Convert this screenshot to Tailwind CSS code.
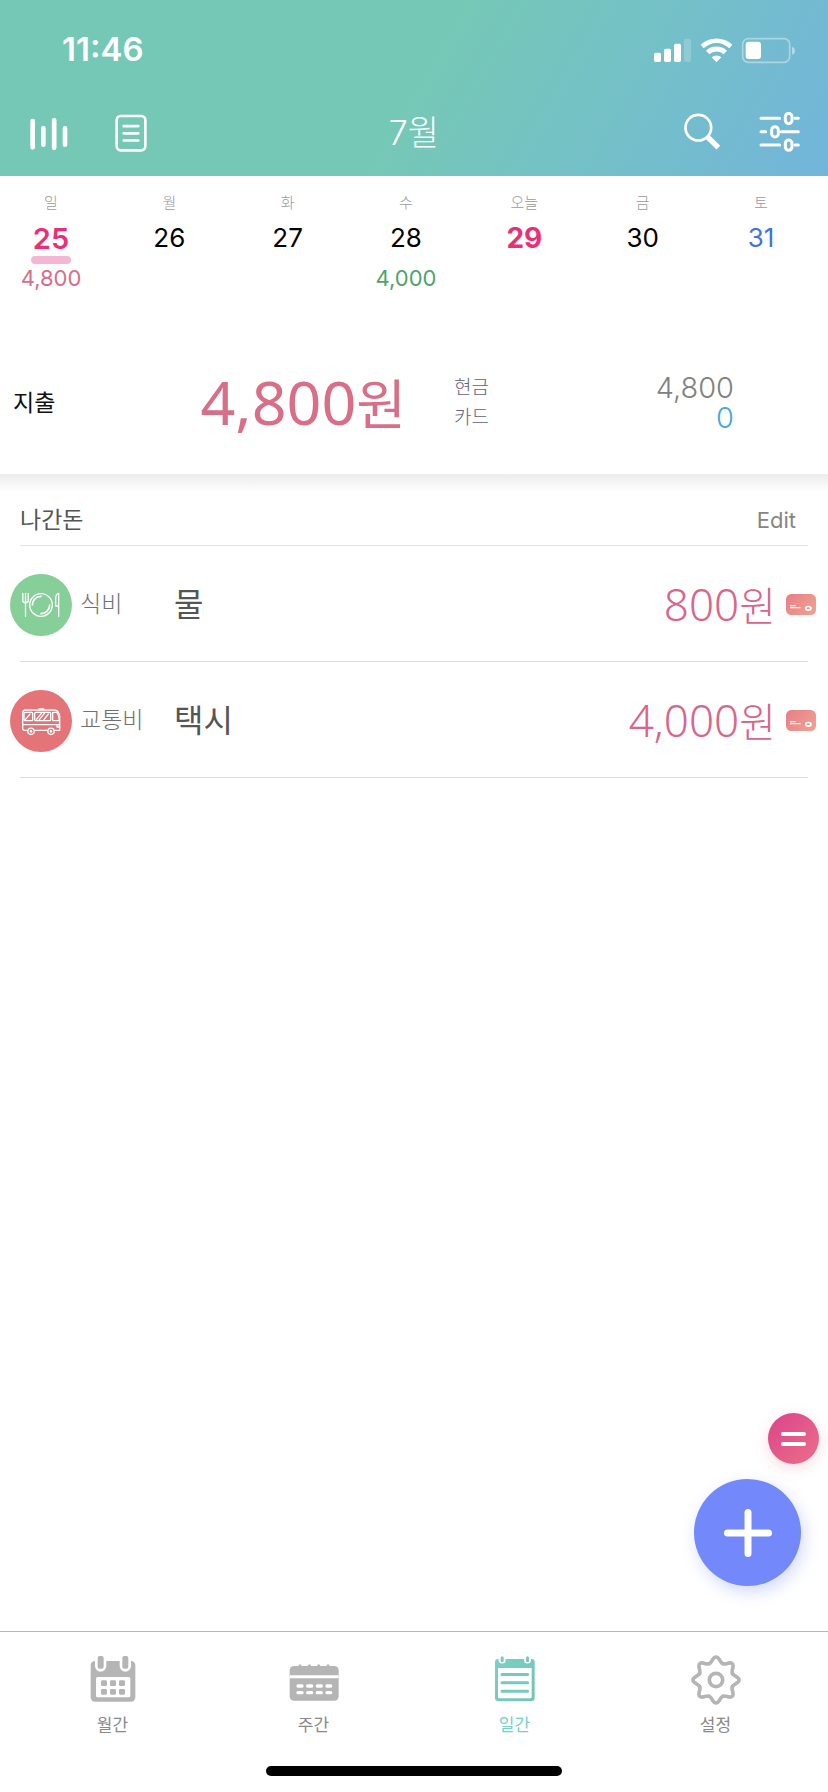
<!DOCTYPE html>
<html lang="ko">
<head>
<meta charset="utf-8">
<meta name="viewport" content="width=device-width, initial-scale=1">
<title>가계부</title>
<script src="https://cdn.jsdelivr.net/npm/@tailwindcss/browser@4"></script>
</head>
<body class="flex min-h-screen flex-col bg-white font-['Inter','Noto_Sans_CJK_KR',sans-serif]">

<header class="bg-linear-[120deg,#76c8b6_0%,#76c8b6_50%,#74c0c8_74%,#72b5da_100%] text-white">
  <div class="flex h-[98px] items-center justify-between pt-0.5 pr-8 pl-[62px]">
    <time class="text-[33px] font-semibold">11:46</time>
    <svg class="h-[30px] w-[142px]" viewBox="717 102 426 90" fill="#fff" aria-label="상태">
      <rect x="717" y="155" width="21" height="28" rx="5"/><rect x="747" y="143" width="21" height="40" rx="5"/><rect x="777" y="128" width="21" height="55" rx="5"/><rect x="807" y="113" width="21" height="70" rx="5" opacity=".2"/>
      <path d="M857 131a70 70 0 0 1 95 0l-9 11a55 55 0 0 0-77 0zM873 149a46 46 0 0 1 63 0l-10 11a31 31 0 0 0-43 0zM890 169a22 22 0 0 1 29 0l-15 15z"/>
      <rect x="983" y="113" width="141" height="71" rx="17" fill="none" stroke="#fff" stroke-width="5" opacity=".4"/>
      <path d="M1131 137q9 3 9 12t-9 12z" opacity=".45"/><rect x="992" y="122" width="46" height="52" rx="9"/>
    </svg>
  </div>
  <div class="grid h-[78px] grid-cols-[1fr_auto_1fr] items-center px-7 pb-2">
    <div class="flex items-center gap-[42px]">
      <button type="button" aria-label="통계"><svg class="size-[42px]" viewBox="87 337 126 126" stroke="#fff" stroke-width="14" stroke-linecap="round"><path d="M101 364v79M133 386v49M165.500 362v82M198 386v49"/></svg></button>
      <button type="button" aria-label="메모"><svg class="h-[42px] w-[38px]" viewBox="338 337 114 126" fill="none" stroke="#fff" stroke-width="8" stroke-linecap="round"><rect x="352" y="349" width="86" height="103" rx="12"/><path d="M373 379.500h44M373 401h44M373 422.500h44"/></svg></button>
    </div>
    <h1 class="text-[34px] leading-[48px] font-light">7월</h1>
    <div class="flex items-center justify-end gap-9">
      <button type="button" aria-label="검색"><svg class="size-[42px]" viewBox="797 337 126 126" fill="none" stroke="#fff"><circle cx="852" cy="384" r="38.500" stroke-width="8"/><path d="M878 410l34 34" stroke-width="16"/></svg></button>
      <button type="button" aria-label="필터"><svg class="size-[42px]" viewBox="1033 337 126 126" fill="none" stroke="#fff" stroke-width="9" stroke-linecap="round"><path d="M1042 356h56M1144 356h10M1042 396h14M1103 396h51M1042 436h56M1144 436h10"/><rect x="1115" y="341" width="20" height="31" rx="10"/><rect x="1074" y="381" width="20" height="31" rx="10"/><rect x="1115" y="421" width="20" height="31" rx="10"/></svg></button>
    </div>
  </div>
</header>

<main class="relative flex-1">
  <ul class="flex h-[154px] justify-between pt-4 pr-8 pl-4 text-center text-[26px] leading-9">
    <li class="w-[70px]"><p class="text-[15px] leading-[22px] font-light text-[#9a9a9a]">일</p><p class="mt-2 h-9 text-[29px] leading-[33px] font-semibold text-[#ea2f77]">25</p><div class="mx-auto -mt-0.5 h-2 w-10 rounded-full bg-[#f3b6d5]"></div><p class="text-[22px] leading-7 text-[#d86e88]">4,800</p></li>
    <li class="w-[70px]"><p class="text-[15px] leading-[22px] font-light text-[#9a9a9a]">월</p><p class="mt-1.5">26</p></li>
    <li class="w-[70px]"><p class="text-[15px] leading-[22px] font-light text-[#9a9a9a]">화</p><p class="mt-1.5">27</p></li>
    <li class="w-[70px]"><p class="text-[15px] leading-[22px] font-light text-[#9a9a9a]">수</p><p class="mt-1.5">28</p><p class="mt-2 text-[22px] leading-7 text-[#50a369]">4,000</p></li>
    <li class="w-[70px]"><p class="text-[15px] leading-[22px] font-light text-[#9a9a9a]">오늘</p><p class="mt-1.5 text-[28px] font-bold text-[#ea2f77]">29</p></li>
    <li class="w-[70px]"><p class="text-[15px] leading-[22px] font-light text-[#9a9a9a]">금</p><p class="mt-1.5">30</p></li>
    <li class="w-[70px]"><p class="text-[15px] leading-[22px] font-light text-[#9a9a9a]">토</p><p class="mt-1.5 text-[#3f74e0]">31</p></li>
  </ul>

  <section class="flex h-[144px] items-center pt-0.5 pr-[94px] pl-[13px]">
    <h2 class="w-[84px] text-[23px] text-[#111]">지출</h2>
    <p class="w-[309px] text-right font-['Noto_Sans','Noto_Sans_CJK_KR',sans-serif] text-[61px] leading-[80px] text-[#d96e88]">4,800<span class="text-[54px]">원</span></p>
    <dl class="ml-12 grid flex-1 grid-cols-2 text-[19px] leading-[30px] font-light text-[#5f6375]">
      <dt>현금</dt><dd class="text-right text-[29px] font-light text-[#808080]">4,800</dd>
      <dt>카드</dt><dd class="text-right text-[29px] font-light text-[#45a9da]">0</dd>
    </dl>
  </section>

  <section class="bg-linear-to-b from-[#ececec] to-white to-[18px]">
    <div class="mx-5 flex h-[72px] items-end justify-between border-b border-[#e3e3e3] pr-3 pb-2 text-[23px] leading-[34px]">
      <h2 class="text-[#555]">나간돈</h2>
      <button type="button" class="text-[22px] text-[#868686]">Edit</button>
    </div>
    <ul>
      <li class="flex h-[115px] items-center pt-0.5 pr-3 pl-2.5">
        <span class="flex size-[62px] shrink-0 items-center justify-center rounded-full bg-[#86cf98]">
          <svg class="size-[42px]" viewBox="60 105 126 126" fill="none" stroke="#fff" stroke-width="4" stroke-linecap="round" stroke-linejoin="round"><circle cx="123" cy="168" r="34"/><path d="M97 168a26 26 0 0 1 26-26M149 168a26 26 0 0 1-26 26" stroke-width="5"/><path d="M68.500 133v22q0 6 8 6t8-6v-22M76.500 133v69M176 202v-69q-9 2-9 16v22h9"/></svg>
        </span>
        <span class="w-[94px] pl-2 text-[23px] font-light text-[#707070]">식비</span>
        <span class="flex-1 pl-2 text-[32px] text-[#555]">물</span>
        <span class="mr-2.5 font-['Noto_Sans','Noto_Sans_CJK_KR',sans-serif] text-[44px] leading-[60px] font-light text-[#d8668a]">800<span class="text-[40px]">원</span></span>
        <svg class="h-[21px] w-[30px]" viewBox="0 0 90 63" fill="none" stroke="#fff"><defs><linearGradient id="card" x2="1" y2=".6"><stop stop-color="#e97d87"/><stop offset="1" stop-color="#ee9e90"/></linearGradient></defs><rect width="90" height="63" rx="16" fill="url(#card)" stroke="none"/><path d="M12 35h17M12 41h32" stroke-width="4"/><ellipse cx="67" cy="43" rx="8" ry="5.500" stroke-width="5"/></svg>
      </li>
      <li class="mx-5 border-t border-[#dcdcdc]" aria-hidden="true"></li>
      <li class="flex h-[115px] items-center pt-0.5 pr-3 pl-2.5">
        <span class="flex size-[62px] shrink-0 items-center justify-center rounded-full bg-[#e47477]">
          <svg class="size-[42px]" viewBox="60 450 126 126" fill="none" stroke="#fff" stroke-width="4" stroke-linecap="round" stroke-linejoin="round"><path d="M82 541h-8q-6 0-6-6v-46q0-9 9-9h88q13 3 14 20v41h-17M104 541h38M69 524h110"/><rect x="72" y="487" width="26" height="25" rx="3"/><rect x="104" y="487" width="48" height="25" rx="3"/><path d="M178 512h-17q-3 0-3-3v-22h13q6 8 7 25M76 509l14-17M109 509l15-19M118 509l15-19M132 509l13-17M117 477h14M179 524h-8v7h8"/><circle cx="93" cy="544" r="9.500"/><circle cx="153" cy="544" r="9.500"/><circle cx="93" cy="544" r="2"/><circle cx="153" cy="544" r="2"/></svg>
        </span>
        <span class="w-[94px] pl-2 text-[23px] font-light text-[#707070]">교통비</span>
        <span class="flex-1 pl-2 text-[32px] text-[#555]">택시</span>
        <span class="mr-2.5 font-['Noto_Sans','Noto_Sans_CJK_KR',sans-serif] text-[44px] leading-[60px] font-light text-[#d8668a]">4,000<span class="text-[40px]">원</span></span>
        <svg class="h-[21px] w-[30px]" viewBox="0 0 90 63" fill="none" stroke="#fff"><rect width="90" height="63" rx="16" fill="url(#card)" stroke="none"/><path d="M12 35h17M12 41h32" stroke-width="4"/><ellipse cx="67" cy="43" rx="8" ry="5.500" stroke-width="5"/></svg>
      </li>
      <li class="mx-5 border-t border-[#dcdcdc]" aria-hidden="true"></li>
    </ul>
  </section>

  <!-- floating actions -->
  <button type="button" aria-label="메뉴" class="absolute right-[9px] bottom-[167px] flex size-[51px] flex-col items-center justify-center gap-1.5 rounded-full bg-linear-135 from-[#db418a] to-[#ea6f89] shadow-[0_4px_14px_#ea6f8940]">
    <span class="h-1 w-[25px] rounded-full bg-white"></span><span class="h-1 w-[25px] rounded-full bg-white"></span>
  </button>
  <button type="button" aria-label="추가" class="absolute right-[27px] bottom-[45px] flex size-[107px] items-center justify-center rounded-full bg-[#7388fb] shadow-[3px_6px_16px_#7388fb50]">
    <svg class="size-12" viewBox="0 0 48 48" stroke="#fff" stroke-width="7" stroke-linecap="round"><path d="M24 3.500v41M3.500 24h41"/></svg>
  </button>
</main>

<footer class="border-t border-[#b8b8b8] bg-white">
  <nav class="grid grid-cols-4 px-3 pt-[23px] text-[17px] leading-[26px] text-[#8a8a8a]">
    <a href="#month" class="flex flex-col items-center gap-[7px]">
      <svg class="size-[50px]" viewBox="86 105 150 150" fill="#b5b5b5"><rect x="94" y="123" width="134" height="122" rx="13"/><path d="M107 118v20a17 17 0 0 0 34 0v-20zM181 118v20a17 17 0 0 0 34 0v-20z" fill="#fff"/><rect x="115" y="108" width="18" height="38" rx="6"/><rect x="189" y="108" width="18" height="38" rx="6"/><rect x="110" y="171" width="103" height="61" rx="5" fill="#fff"/><g><rect x="125" y="181" width="18" height="17" rx="4"/><rect x="152" y="181" width="18" height="17" rx="4"/><rect x="179" y="181" width="18" height="17" rx="4"/><rect x="125" y="207" width="18" height="17" rx="4"/><rect x="152" y="207" width="18" height="17" rx="4"/><rect x="179" y="207" width="18" height="17" rx="4"/></g></svg>
      월간</a>
    <a href="#week" class="flex flex-col items-center gap-[7px]">
      <svg class="size-[50px]" viewBox="688 105 150 150" fill="#b5b5b5"><rect x="690" y="138" width="147" height="104" rx="13"/><path d="M721 140v-3M749 140v-3M777 140v-3M805 140v-3" stroke="#b5b5b5" stroke-width="9" stroke-linecap="round"/><path d="M690 166h147v9H690z" fill="#fff"/><path d="M715 198h12M744 198h12M773 198h12M802 198h11M715 218h12M744 218h12M773 218h12M802 218h11" stroke="#fff" stroke-width="10" stroke-linecap="round"/></svg>
      주간</a>
    <a href="#day" aria-current="page" class="flex flex-col items-center gap-[7px] text-[#74d2cb]">
      <svg class="size-[50px]" viewBox="91 105 150 150"><defs><linearGradient id="teal" x2="1" y2="1"><stop stop-color="#7bd0c5"/><stop offset="1" stop-color="#72c5b4"/></linearGradient></defs><rect x="106" y="117" width="119" height="126" rx="9" fill="url(#teal)"/><path d="M115 144h101v87q0 4-4 4h-93q-4 0-4-4z" fill="#fff"/><path d="M117 113v7a10.500 10.500 0 0 0 21 0v-7zM193 113v7a10.500 10.500 0 0 0 21 0v-7z" fill="#fff"/><path d="M127.500 113v9M203.500 113v9M127 163.500h77M127 188.500h77M127 213.500h77" stroke="#76cabb" stroke-width="9" stroke-linecap="round"/></svg>
      일간</a>
    <a href="#settings" class="flex flex-col items-center gap-[7px]">
      <svg class="size-[50px]" viewBox="-75 -75 150 150" fill="none" stroke="#b5b5b5" stroke-width="11" stroke-linecap="round"><defs><path id="lobe" d="M-20.300-49C-10-53.200-11-69 0-69S10-53.200 20.300-49"/></defs><circle r="20"/><use href="#lobe"/><use href="#lobe" transform="rotate(45)"/><use href="#lobe" transform="rotate(90)"/><use href="#lobe" transform="rotate(135)"/><use href="#lobe" transform="rotate(180)"/><use href="#lobe" transform="rotate(225)"/><use href="#lobe" transform="rotate(270)"/><use href="#lobe" transform="rotate(315)"/></svg>
      설정</a>
  </nav>
  <div class="mx-auto mt-7 mb-4 h-2.5 w-[296px] rounded-full bg-black"></div>
</footer>
</body>
</html>
